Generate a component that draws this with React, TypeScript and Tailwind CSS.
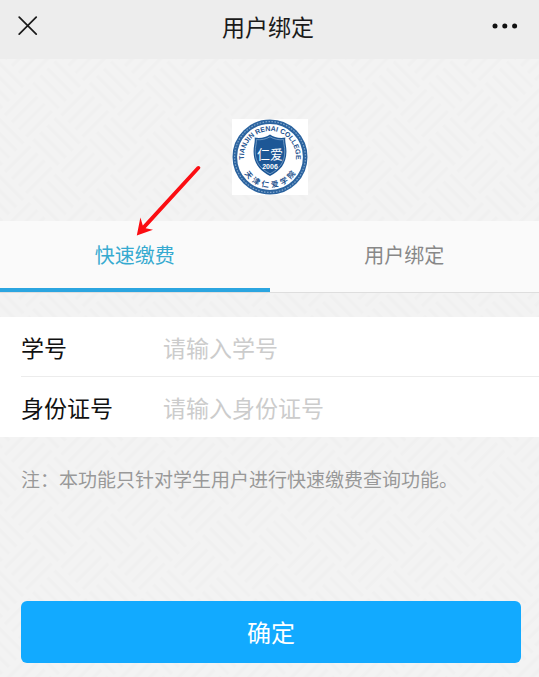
import React, { useState } from 'react';

const TABS = [
  { id: 'pay', label: '快速缴费' },
  { id: 'bind', label: '用户绑定' },
];

const FIELDS = [
  { id: 'studentNo', label: '学号', placeholder: '请输入学号' },
  { id: 'idCard', label: '身份证号', placeholder: '请输入身份证号' },
];

// 校徽下半圈的字，按角度排开
const SEAL_CHARS = [
  { char: '天', angle: 50 },
  { char: '津', angle: 30 },
  { char: '仁', angle: 10 },
  { char: '爱', angle: -10 },
  { char: '学', angle: -30 },
  { char: '院', angle: -50 },
];

const CloseIcon = () => (
  <svg width="20" height="20" viewBox="0 0 20 20" fill="none" stroke="#1a1a1a" strokeWidth="1.7" strokeLinecap="round">
    <path d="M1.2 1.2L18.2 18.2M18.2 1.2L1.2 18.2" />
  </svg>
);

const MoreIcon = () => (
  <svg width="26" height="6" viewBox="0 0 26 6" fill="#111111">
    <circle cx="3" cy="3" r="2.5" />
    <circle cx="12.8" cy="3" r="2.5" />
    <circle cx="22.6" cy="3" r="2.5" />
  </svg>
);

// 编织纹理底图
const WeaveBackground = () => (
  <svg className="absolute inset-0 -z-10 h-full w-full" aria-hidden="true">
    <defs>
      <pattern id="weave" width="80" height="80" patternUnits="userSpaceOnUse" patternTransform="rotate(45)">
        <g stroke="#f0f0f0" strokeWidth="3" fill="none">
          <path d="M2 5H38M2 15H38M2 25H38M2 35H38" />
          <path d="M42 45H78M42 55H78M42 65H78M42 75H78" />
          <path d="M45 2V38M55 2V38M65 2V38M75 2V38" />
          <path d="M5 42V78M15 42V78M25 42V78M35 42V78" />
        </g>
      </pattern>
    </defs>
    <rect width="100%" height="100%" fill="url(#weave)" />
  </svg>
);

const CollegeLogo = () => (
  <svg width="76" height="76" viewBox="0 0 76 76" role="img" aria-label="天津仁爱学院">
    <defs>
      <path id="arcTop" d="M12.4 42.5A26 26 0 1 1 63.6 42.5" />
    </defs>
    <rect width="76" height="76" fill="#ffffff" />
    <circle cx="38" cy="38" r="35.2" fill="none" stroke="#2b639f" strokeWidth="4.6" />
    <circle cx="38" cy="38" r="35.4" fill="none" stroke="#7fa5cb" strokeWidth="1.2" strokeDasharray="1.6 1.4" />
    <g fill="#1f548f">
      <text fontSize="7" fontWeight="700" fontFamily="'Liberation Sans', sans-serif" textAnchor="middle">
        <textPath href="#arcTop" startOffset="50%">TIANJIN RENAI COLLEGE</textPath>
      </text>
      {SEAL_CHARS.map(({ char, angle }) => (
        <text
          key={char}
          x="38"
          y="68.4"
          fontSize="7.6"
          fontWeight="700"
          fontFamily="'Noto Sans CJK SC', sans-serif"
          textAnchor="middle"
          transform={`rotate(${angle} 38 38)`}
        >
          {char}
        </text>
      ))}
    </g>
    <path
      d="M38 15.6C34 18.4 28.6 19.6 22.6 18.6C23.4 23 21.4 27 21.6 33C21.8 45 28 52 38 57C48 52 54.2 45 54.4 33C54.6 27 52.6 23 53.4 18.6C47.4 19.6 42 18.4 38 15.6Z"
      fill="#1d5796"
    />
    <path
      d="M38 17.8C34 20.2 29 21.2 24.4 20.6C24.8 24.6 23 28 23.2 33C23.4 43.8 29 50 38 54.8C47 50 52.6 43.8 52.8 33C53 28 51.2 24.6 51.6 20.6C47 21.2 42 20.2 38 17.8Z"
      fill="none"
      stroke="#8db0d3"
      strokeWidth="0.7"
    />
    <text x="38" y="40" fontSize="13" fill="#ffffff" fontFamily="'Noto Sans CJK SC', sans-serif" textAnchor="middle">仁爱</text>
    <text x="38" y="49.6" fontSize="7" fontWeight="700" fill="#ffffff" fontFamily="'Liberation Sans', sans-serif" textAnchor="middle">2006</text>
  </svg>
);

const GuideArrow = () => (
  <svg className="pointer-events-none absolute -top-14 left-1/2" width="66" height="74" viewBox="0 0 66 74" aria-hidden="true">
    <path d="M62 1.4Q64.6 0 65.4 2.6L65 3.8L10.6 63.2L18 64.8L1.8 70.4L5.4 52.6L7.8 60.6Z" fill="#fb0d12" />
  </svg>
);

const App: React.FC = () => {
  const [activeTab, setActiveTab] = useState('pay');
  const [values, setValues] = useState<Record<string, string>>({});

  return (
    <div className="relative isolate min-h-screen bg-[#f3f3f3] font-['Noto_Sans_CJK_SC',sans-serif]">
      <WeaveBackground />

      <header className="grid h-[59px] grid-cols-[1fr_auto_1fr] items-center bg-[#ededed] pr-[21px] pl-[18px] pb-2">
        <button type="button" aria-label="关闭" className="justify-self-start">
          <CloseIcon />
        </button>
        <h1 className="text-[23px] leading-8 text-[#1a1a1a]">用户绑定</h1>
        <button type="button" aria-label="更多" className="justify-self-end">
          <MoreIcon />
        </button>
      </header>

      <main>
        <div className="flex justify-center pt-[60px] pb-[26px]">
          <CollegeLogo />
        </div>

        <div role="tablist" className="grid h-[72px] grid-cols-2 border-b border-[#dedede] bg-[#fafafa]">
          {TABS.map((tab) => (
            <button
              key={tab.id}
              type="button"
              role="tab"
              aria-selected={activeTab === tab.id}
              onClick={() => setActiveTab(tab.id)}
              className={`relative border-b-4 text-[20px] leading-7 ${
                activeTab === tab.id ? 'border-[#2ba5e0] text-[#36aad0]' : 'border-transparent text-[#888888]'
              }`}
            >
              {tab.label}
              {tab.id === 'pay' && <GuideArrow />}
            </button>
          ))}
        </div>

        <form onSubmit={(e) => e.preventDefault()}>
          <div className="mt-6 divide-y divide-[#ececec] bg-white pl-[21px]">
            {FIELDS.map((field) => (
              <div key={field.id} className="flex h-[60px] items-center">
                <label htmlFor={field.id} className="w-[142px] shrink-0 text-[23px] leading-8 text-[#111111]">
                  {field.label}
                </label>
                <input
                  id={field.id}
                  type="text"
                  placeholder={field.placeholder}
                  value={values[field.id] || ''}
                  onChange={(e) => setValues({ ...values, [field.id]: e.target.value })}
                  className="h-full min-w-0 flex-1 bg-transparent text-[23px] outline-none placeholder:text-[#cccccc]"
                />
              </div>
            ))}
          </div>

          <p className="px-[21px] pt-7 text-[19px] leading-7 text-[#999999]">注：本功能只针对学生用户进行快速缴费查询功能。</p>

          <div className="pr-[18px] pl-[21px] pt-[108px] pb-[14px]">
            <button type="submit" className="h-[62px] w-full rounded-md bg-[#12aaff] text-[24px] leading-8 text-white">
              确定
            </button>
          </div>
        </form>
      </main>
    </div>
  );
};

export default App;
